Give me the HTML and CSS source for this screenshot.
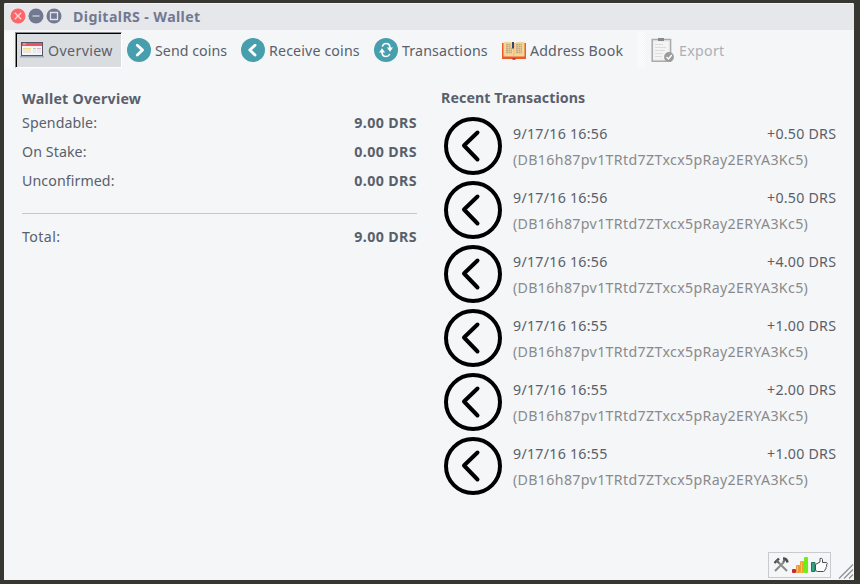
FILE: index.html
```
<!DOCTYPE html>
<html lang="en">
<head>
<meta charset="utf-8">
<title>DigitalRS - Wallet</title>
<link rel="stylesheet" href="styles.css">
</head>
<body>
<svg class="defs" width="0" height="0">
  <symbol id="incoming" viewBox="0 0 58 58"><circle cx="29" cy="29" r="27" fill="none" stroke="#000" stroke-width="4"/><path d="M33.500 15.500 20 28.500l13.500 14" fill="none" stroke="#000" stroke-width="4" stroke-linecap="round" stroke-linejoin="round"/></symbol>
</svg>
<main class="window">
  <header class="titlebar">
    <svg width="54" height="18" viewBox="0 0 54 18">
      <circle cx="8" cy="8" r="7.500" fill="#fc6668"/><path d="m4.800 4.800 6.400 6.400m0-6.400-6.400 6.400" stroke="#ffd5d5" stroke-width="1.300"/>
      <circle cx="26" cy="8" r="7.500" fill="#717991"/><path d="M22.500 8h7" stroke="#c5c9d2" stroke-width="1.500"/>
      <circle cx="44" cy="8" r="7.500" fill="#717991"/><path d="M40.500 4.500h7v7h-7z" fill="none" stroke="#e0e2e6" stroke-width="1.300"/>
    </svg>
    <h1>DigitalRS - Wallet</h1>
  </header>
  <nav class="toolbar">
    <span class="grip"></span>
    <button class="tool active">
      <svg width="24" height="24" viewBox="0 0 24 24"><path d="M1 4h22v15H1z" fill="#545768"/><path d="M2 5h20v3H2z" fill="#ef5260"/><path d="M3 6h3" stroke="#fbb"/><path d="M2 8h20v9H2z" fill="#f4f5f7"/><path d="M3 10h8v5H3z" fill="#ebe7df"/><path d="M3 10.500h8" stroke="#f2d88c"/><path d="M13 10h3v5h-3zm4 0h4v5h-4z" fill="#e6e9ee"/><path d="M13 10.500h3" stroke="#a9dba7"/><path d="M17 10.500h4" stroke="#e9a8c3"/><path d="M0 18h24v1.500H0z" fill="#a8abc0"/></svg>
      <span class="t-overview">Overview</span>
    </button>
    <button class="tool send">
      <svg width="24" height="24" viewBox="0 0 24 24"><circle cx="12" cy="12" r="12" fill="#479fad"/><path d="m10.300 7.200 5.200 4.800-5.200 5" fill="none" stroke="#fff" stroke-width="2.900" stroke-linecap="round" stroke-linejoin="round"/></svg>
      <span class="t-send">Send coins</span>
    </button>
    <button class="tool receive">
      <svg width="24" height="24" viewBox="0 0 24 24"><circle cx="12" cy="12" r="12" fill="#479fad"/><path d="m14 7.200-5.200 4.800 5.200 5" fill="none" stroke="#fff" stroke-width="2.900" stroke-linecap="round" stroke-linejoin="round"/></svg>
      <span class="t-receive">Receive coins</span>
    </button>
    <button class="tool transactions">
      <svg width="24" height="24" viewBox="0 0 24 24"><circle cx="12" cy="12" r="12" fill="#479fad"/><path d="M8.500 8Q9.500 5.500 12 5.500q4 0 4 4.500M15.500 16.500q-1 2-3.500 2-4 0-4-4.500" fill="none" stroke="#fff" stroke-width="1.600" stroke-linecap="round"/><path d="M5 14.500 8 10.300l3.200 4.200zM12.800 9.500l3.200 4.200 3-4.200z" fill="#fff"/></svg>
      <span class="t-trans">Transactions</span>
    </button>
    <button class="tool address">
      <svg width="24" height="24" viewBox="0 0 24 24"><path d="M0 5h24v16h-10l-1 .8h-2l-1-.8H0z" fill="#ef5a2c"/><path d="M1.500 4Q9 3 12 5.500 15 3 22.500 4v14.500H1.500z" fill="#f4d696"/><path d="M12 6v12.500" stroke="#e9bd74"/><path d="M4 6.500h5m-5 2h5m-5 2h6m-6 2h6m-6 2h6m4-8h6m-6 2h6m-6 2h6m-6 2h6m-6 2h6" stroke="#c0a984" stroke-width="1.300" stroke-dasharray="2 .5"/><path d="M10 4h2v7l-1-1-1 1z" fill="#3d4468"/><path d="M10.500 20h3v1.500h-3z" fill="#c92e3d"/></svg>
      <span class="t-address">Address Book</span>
    </button>
    <span class="grip second"></span>
    <button class="tool export" disabled>
      <svg width="24" height="24" viewBox="0 0 24 24"><path d="M1.200 1.500h18.400v21.700H1.200z" fill="#eee" stroke="#aaa" stroke-width="1.500"/><path d="M3 4h14v17H3z" fill="#f4f4f4"/><path d="M7 0h6v3H7z" fill="#888"/><path d="M4 6.500h8m-8 3h11m-11 3h10m-10 3h8m-8 3h7" stroke="#dcdcdc"/><circle cx="18" cy="19" r="4.900" fill="#9c9c9c"/><path d="m15.500 19 2 2 3.200-4" fill="none" stroke="#fff" stroke-width="1.400"/></svg>
      <span class="t-export">Export</span>
    </button>
  </nav>
  <div class="content">
    <section class="overview">
      <h2>Wallet Overview</h2>
      <dl>
        <div><dt>Spendable:</dt><dd>9.00 DRS</dd></div>
        <div><dt>On Stake:</dt><dd>0.00 DRS</dd></div>
        <div><dt>Unconfirmed:</dt><dd>0.00 DRS</dd></div>
        <div class="total"><dt>Total:</dt><dd>9.00 DRS</dd></div>
      </dl>
    </section>
    <section class="recent">
      <h2>Recent Transactions</h2>
      <ul>
        <li><svg width="58" height="58"><use href="#incoming"/></svg><div class="info"><p><time>9/17/16 16:56</time><span class="amount">+0.50 DRS</span></p><p class="hash"><span>(DB16h87pv1TRtd7ZTxcx5pRay2ERYA3Kc5)</span></p></div></li>
        <li><svg width="58" height="58"><use href="#incoming"/></svg><div class="info"><p><time>9/17/16 16:56</time><span class="amount">+0.50 DRS</span></p><p class="hash"><span>(DB16h87pv1TRtd7ZTxcx5pRay2ERYA3Kc5)</span></p></div></li>
        <li><svg width="58" height="58"><use href="#incoming"/></svg><div class="info"><p><time>9/17/16 16:56</time><span class="amount">+4.00 DRS</span></p><p class="hash"><span>(DB16h87pv1TRtd7ZTxcx5pRay2ERYA3Kc5)</span></p></div></li>
        <li><svg width="58" height="58"><use href="#incoming"/></svg><div class="info"><p><time>9/17/16 16:55</time><span class="amount">+1.00 DRS</span></p><p class="hash"><span>(DB16h87pv1TRtd7ZTxcx5pRay2ERYA3Kc5)</span></p></div></li>
        <li><svg width="58" height="58"><use href="#incoming"/></svg><div class="info"><p><time>9/17/16 16:55</time><span class="amount">+2.00 DRS</span></p><p class="hash"><span>(DB16h87pv1TRtd7ZTxcx5pRay2ERYA3Kc5)</span></p></div></li>
        <li><svg width="58" height="58"><use href="#incoming"/></svg><div class="info"><p><time>9/17/16 16:55</time><span class="amount">+1.00 DRS</span></p><p class="hash"><span>(DB16h87pv1TRtd7ZTxcx5pRay2ERYA3Kc5)</span></p></div></li>
      </ul>
    </section>
  </div>
  <footer class="statusbar">
    <div class="status">
      <svg width="16" height="16" viewBox="0 0 16 16"><path d="m2 14 9-9M14 14 5 5" stroke="#888a88" stroke-width="2"/><path d="m1.500 6 4.500-4.500M10 1.500q4 0 4.500 4" fill="none" stroke="#494c4a" stroke-width="2.400"/><path d="m3 3 3 3m4-1 2-2" stroke="#666" stroke-width="2"/></svg>
      <svg width="16" height="16" viewBox="0 0 16 16"><rect y="12" width="4" height="4" rx="1" fill="#cc2631"/><rect x="4" y="8" width="4" height="8" rx="1" fill="#e9963d"/><rect x="8" y="4" width="4" height="12" rx="1" fill="#f0a42f"/><rect x="12" width="4" height="16" rx="1" fill="#6eed16"/><path d="M5.500 9v6m4-10v10" stroke="#f7c76e"/></svg>
      <svg width="17" height="16" viewBox="0 0 17 16"><path d="M.5 5.500H4v9H.5z" fill="#35a284" stroke="#26745f"/><path d="M4.500 7.500 9 5V1.500q2-1 2.500 1v3h4q1.500 1 0 2.500.8 1.500-.5 2.500.5 1.500-1 2 0 1.500-1.500 2h-6l-2-1z" fill="#fff" stroke="#484e50"/></svg>
    </div>
    <svg class="resize" width="16" height="16" viewBox="0 0 16 16"><path d="M1 15.500 15 1.500M6 15.500l9-9M11 15.500l4-4" stroke="#8e9297" stroke-width="1.300"/></svg>
  </footer>
</main>
</body>
</html>
```
FILE: styles.css
```
* { box-sizing: border-box; margin: 0; padding: 0; }
body {
  width: 860px; height: 584px; overflow: hidden; padding: 3px 6px 4px 4px;
  background: #383631; color: #5a606b;
  font: 14.2px/20px "Noto Sans", sans-serif;
}
.defs { position: absolute; }
.window { width: 850px; height: 577px; display: flex; flex-direction: column; background: #f4f6f8; border-radius: 2px 2px 0 0; overflow: hidden; }
.titlebar { height: 27px; flex: none; display: flex; align-items: center; gap: 9px; padding-left: 6px; background: #e6e7eb; border-top: 1px solid #f3f3f5; color: #717991; }
h1 { font-size: 14.2px; line-height: 20px; font-weight: 700; white-space: nowrap; letter-spacing: .38px; }
.toolbar { height: 40px; flex: none; display: flex; padding: 2px 0 0 1px; }
.grip { width: 8px; height: 36px; margin-right: 2px; background: repeating-conic-gradient(#fff 0 25%, #f1f3f5 0 50%) 0 0 / 2px 2px; }
.tool { display: flex; align-items: center; gap: 4px; height: 36px; border: 0; background: none; color: inherit; font: inherit; white-space: nowrap; flex: none; }
.tool svg { flex: none; }
.tool span { line-height: 20px; padding-top: 2px; letter-spacing: .15px; }
.tool .t-overview { letter-spacing: .37px; }
.tool .t-send { letter-spacing: .05px; }
.tool .t-export { letter-spacing: .3px; }
.active { width: 107px; padding-left: 4px; background: #dadde0; border: 1px solid #888c90; border-right-color: #fff; border-bottom-color: #fff; box-shadow: inset 1px 1px #000; }
.send { width: 114px; padding-left: 5px; }
.receive { width: 133px; padding-left: 5px; }
.transactions { width: 128px; padding-left: 5px; }
.address { width: 140px; padding-left: 5px; }
.second { margin: 0 6px 0 0; }
.export { color: #acb0b6; }
.content { flex: 1; display: grid; grid-template-columns: 395px 395px; gap: 24px; padding: 18px 0 0 18px; }
h2 { font-size: 14.2px; line-height: 20px; font-weight: 700; white-space: nowrap; }
.overview h2 { letter-spacing: .25px; }
.recent h2 { letter-spacing: .1px; }
.overview { padding-top: 1px; }
dl { padding-top: 4px; }
dl > div { display: flex; justify-content: space-between; margin-bottom: 9px; }
dt { letter-spacing: .09px; }
dd { font-weight: 700; letter-spacing: .42px; margin-right: -.1px; }
dl > .total { margin: 22px 0 0; padding-top: 13px; border-top: 1px solid #c5c8ca; }
.total dt { letter-spacing: .4px; }
ul { list-style: none; padding-top: 7px; }
li { display: flex; height: 64px; padding: 2px 0 0 3px; gap: 11px; }
.info { flex: 1; padding-top: 7px; }
.info p { display: flex; justify-content: space-between; height: 26px; white-space: nowrap; }
time { letter-spacing: .27px; }
.amount { letter-spacing: .25px; margin-right: -.25px; }
.info .hash { color: #8a8a8b; letter-spacing: .345px; }
.statusbar { height: 31px; flex: none; display: flex; justify-content: flex-end; padding-top: 3px; }
.status { width: 63px; height: 26px; display: flex; align-items: center; gap: 3px; padding-left: 4px; border: 1px solid #c8cacd; margin-right: 7px; }
.resize { margin-top: 11px; }
```
